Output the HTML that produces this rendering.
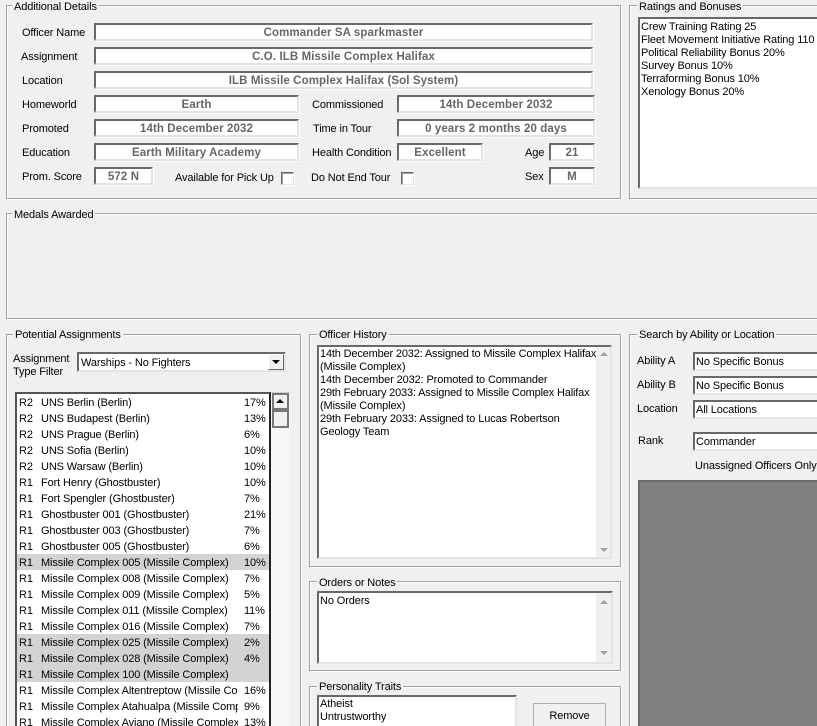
<!DOCTYPE html>
<html><head><meta charset="utf-8">
<style>
html,body{margin:0;padding:0;background:#f0f0f0;width:817px;height:726px;overflow:hidden}
#r{position:relative;width:817px;height:726px;overflow:hidden;background:#f0f0f0;font:11px/16px "Liberation Sans",sans-serif;letter-spacing:-.12px;color:#000}
#r div{position:absolute;box-sizing:border-box}
.g{border:1px solid #a0a0a0;box-shadow:inset 1px 1px 0 #fff,1px 1px 0 #fff}
.gt{background:#f0f0f0;padding:0 2px;white-space:nowrap;height:15px}
.l{white-space:nowrap;height:16px}
.f{background:#fff;border:2px solid;border-color:#696969 #e3e3e3 #e3e3e3 #696969;text-align:center;font-weight:bold;font-size:11.5px;color:#666;line-height:16px;letter-spacing:.1px;white-space:nowrap;overflow:hidden;box-shadow:1px 1px 0 #fff}
.w{background:#fff;border:2px solid;border-color:#696969 #e3e3e3 #e3e3e3 #696969;white-space:nowrap;overflow:hidden;padding:0 1px}
.c{background:#fff;border:1px solid;border-color:#696969 #e3e3e3 #e3e3e3 #696969;box-shadow:inset 1px 1px 0 #a0a0a0,1px 1px 0 #fff;width:13px;height:13px}
.row{left:0;width:252px;height:16px;line-height:18px;white-space:nowrap;overflow:hidden}
.hl{background:#d3d3d3}
.row span{position:absolute;top:0;height:16px}
.a{left:2px}.b{left:24px;width:197px;overflow:hidden}.p{left:227px}
.t{letter-spacing:-.17px}
</style></head><body><div id="r">

<div class="g" style="left:6px;top:5px;width:615px;height:194px"></div>
<div class="gt" style="left:12px;top:-1px">Additional Details</div>
<div class="l" style="left:22px;top:25px">Officer Name</div>
<div class="l" style="left:21px;top:49px">Assignment</div>
<div class="l" style="left:22px;top:73px">Location</div>
<div class="l" style="left:22px;top:97px">Homeworld</div>
<div class="l" style="left:22px;top:121px">Promoted</div>
<div class="l" style="left:22px;top:145px">Education</div>
<div class="l" style="left:22px;top:169px">Prom. Score</div>
<div class="f" style="left:94px;top:23px;width:499px;height:18px">Commander SA sparkmaster</div>
<div class="f" style="left:94px;top:47px;width:499px;height:18px">C.O. ILB Missile Complex Halifax</div>
<div class="f" style="left:94px;top:71px;width:499px;height:18px">ILB Missile Complex Halifax (Sol System)</div>
<div class="f" style="left:94px;top:95px;width:205px;height:18px">Earth</div>
<div class="f" style="left:94px;top:119px;width:205px;height:18px">14th December 2032</div>
<div class="f" style="left:94px;top:143px;width:205px;height:18px">Earth Military Academy</div>
<div class="f" style="left:94px;top:167px;width:59px;height:18px">572 N</div>
<div class="l" style="left:175px;top:170px">Available for Pick Up</div>
<div class="c" style="left:281px;top:172px"></div>
<div class="l" style="left:312px;top:97px">Commissioned</div>
<div class="l" style="left:313px;top:121px">Time in Tour</div>
<div class="l" style="left:312px;top:145px">Health Condition</div>
<div class="l" style="left:311px;top:170px">Do Not End Tour</div>
<div class="c" style="left:401px;top:172px"></div>
<div class="f" style="left:397px;top:95px;width:198px;height:18px">14th December 2032</div>
<div class="f" style="left:397px;top:119px;width:198px;height:18px">0 years 2 months 20 days</div>
<div class="f" style="left:397px;top:143px;width:86px;height:18px">Excellent</div>
<div class="l" style="left:525px;top:145px">Age</div>
<div class="l" style="left:525px;top:169px">Sex</div>
<div class="f" style="left:549px;top:143px;width:46px;height:18px">21</div>
<div class="f" style="left:549px;top:167px;width:46px;height:18px">M</div>

<div class="g" style="left:629px;top:5px;width:188px;height:194px;border-right:0"></div>
<div class="gt" style="left:637px;top:-1px">Ratings and Bonuses</div>
<div class="w" style="left:638px;top:17px;width:179px;height:172px;line-height:13px;padding-top:2px;border-right:0">Crew Training Rating 25<br>Fleet Movement Initiative Rating 110<br>Political Reliability Bonus 20%<br>Survey Bonus 10%<br>Terraforming Bonus 10%<br>Xenology Bonus 20%</div>

<div class="g" style="left:6px;top:213px;width:811px;height:106px;border-right:0"></div>
<div class="gt" style="left:12px;top:207px">Medals Awarded</div>

<div class="g" style="left:6px;top:334px;width:295px;height:392px;border-bottom:0"></div>
<div class="gt" style="left:13px;top:327px">Potential Assignments</div>
<div class="l" style="left:13px;top:351px">Assignment</div>
<div class="l" style="left:13px;top:364px">Type Filter</div>
<div class="w" style="left:77px;top:352px;width:209px;height:20px;line-height:18px;padding-left:2px">Warships - No Fighters</div>
<div style="left:268px;top:354px;width:16px;height:16px;background:#f0f0f0;border:1px solid;border-color:#fff #696969 #696969 #fff"></div>
<div style="left:272px;top:360px;width:0;height:0;border-left:4px solid transparent;border-right:4px solid transparent;border-top:4px solid #000"></div>

<div style="left:15px;top:392px;width:256px;height:334px;background:#fff;border-top:2px solid #555;border-left:2px solid #555;border-right:2px solid #222;overflow:hidden">
<div class="row" style="top:0"><span class="a">R2</span><span class="b">UNS Berlin (Berlin)</span><span class="p">17%</span></div>
<div class="row" style="top:16px"><span class="a">R2</span><span class="b">UNS Budapest (Berlin)</span><span class="p">13%</span></div>
<div class="row" style="top:32px"><span class="a">R2</span><span class="b">UNS Prague (Berlin)</span><span class="p">6%</span></div>
<div class="row" style="top:48px"><span class="a">R2</span><span class="b">UNS Sofia (Berlin)</span><span class="p">10%</span></div>
<div class="row" style="top:64px"><span class="a">R2</span><span class="b">UNS Warsaw (Berlin)</span><span class="p">10%</span></div>
<div class="row" style="top:80px"><span class="a">R1</span><span class="b">Fort Henry (Ghostbuster)</span><span class="p">10%</span></div>
<div class="row" style="top:96px"><span class="a">R1</span><span class="b">Fort Spengler (Ghostbuster)</span><span class="p">7%</span></div>
<div class="row" style="top:112px"><span class="a">R1</span><span class="b">Ghostbuster 001 (Ghostbuster)</span><span class="p">21%</span></div>
<div class="row" style="top:128px"><span class="a">R1</span><span class="b">Ghostbuster 003 (Ghostbuster)</span><span class="p">7%</span></div>
<div class="row" style="top:144px"><span class="a">R1</span><span class="b">Ghostbuster 005 (Ghostbuster)</span><span class="p">6%</span></div>
<div class="row hl" style="top:160px"><span class="a">R1</span><span class="b">Missile Complex 005 (Missile Complex)</span><span class="p">10%</span></div>
<div class="row" style="top:176px"><span class="a">R1</span><span class="b">Missile Complex 008 (Missile Complex)</span><span class="p">7%</span></div>
<div class="row" style="top:192px"><span class="a">R1</span><span class="b">Missile Complex 009 (Missile Complex)</span><span class="p">5%</span></div>
<div class="row" style="top:208px"><span class="a">R1</span><span class="b">Missile Complex 011 (Missile Complex)</span><span class="p">11%</span></div>
<div class="row" style="top:224px"><span class="a">R1</span><span class="b">Missile Complex 016 (Missile Complex)</span><span class="p">7%</span></div>
<div class="row hl" style="top:240px"><span class="a">R1</span><span class="b">Missile Complex 025 (Missile Complex)</span><span class="p">2%</span></div>
<div class="row hl" style="top:256px"><span class="a">R1</span><span class="b">Missile Complex 028 (Missile Complex)</span><span class="p">4%</span></div>
<div class="row hl" style="top:272px"><span class="a">R1</span><span class="b">Missile Complex 100 (Missile Complex)</span></div>
<div class="row" style="top:288px"><span class="a">R1</span><span class="b">Missile Complex Altentreptow (Missile Complex)</span><span class="p">16%</span></div>
<div class="row" style="top:304px"><span class="a">R1</span><span class="b">Missile Complex Atahualpa (Missile Complex)</span><span class="p">9%</span></div>
<div class="row" style="top:320px;height:12px"><span class="a">R1</span><span class="b">Missile Complex Aviano (Missile Complex)</span><span class="p">13%</span></div>
</div>
<div style="left:271px;top:392px;width:19px;height:334px;background:#f6f6f6;border-top:1px solid #ccc"></div>
<div style="left:272px;top:393px;width:17px;height:17px;background:#f0f0f0;border:2px solid #777"></div>
<div style="left:276px;top:399px;width:0;height:0;border-left:4px solid transparent;border-right:4px solid transparent;border-bottom:4px solid #000"></div>
<div style="left:272px;top:410px;width:17px;height:18px;background:#f0f0f0;border:2px solid #777"></div>

<div class="g" style="left:309px;top:334px;width:312px;height:233px"></div>
<div class="gt" style="left:317px;top:327px">Officer History</div>
<div class="w" style="left:317px;top:345px;width:295px;height:214px;line-height:13px;padding-top:1px"><span class="t">14th December 2032: Assigned to Missile Complex Halifax</span><br>(Missile Complex)<br>14th December 2032: Promoted to Commander<br><span class="t">29th February 2033: Assigned to Missile Complex Halifax</span><br>(Missile Complex)<br>29th February 2033: Assigned to Lucas Robertson<br>Geology Team</div>
<div style="left:596px;top:347px;width:14px;height:210px;background:#f0f0f0"></div>
<div style="left:600px;top:352px;width:0;height:0;border-left:4px solid transparent;border-right:4px solid transparent;border-bottom:4px solid #a0a0a0"></div>
<div style="left:600px;top:548px;width:0;height:0;border-left:4px solid transparent;border-right:4px solid transparent;border-top:4px solid #a0a0a0"></div>

<div class="g" style="left:309px;top:581px;width:312px;height:90px"></div>
<div class="gt" style="left:317px;top:575px">Orders or Notes</div>
<div class="w" style="left:317px;top:591px;width:296px;height:73px;line-height:13px;padding-top:2px">No Orders</div>
<div style="left:596px;top:593px;width:15px;height:69px;background:#f0f0f0"></div>
<div style="left:600px;top:600px;width:0;height:0;border-left:4px solid transparent;border-right:4px solid transparent;border-bottom:4px solid #a0a0a0"></div>
<div style="left:600px;top:651px;width:0;height:0;border-left:4px solid transparent;border-right:4px solid transparent;border-top:4px solid #a0a0a0"></div>

<div class="g" style="left:309px;top:686px;width:312px;height:40px;border-bottom:0"></div>
<div class="gt" style="left:317px;top:679px">Personality Traits</div>
<div class="w" style="left:317px;top:695px;width:200px;height:31px;line-height:13px;padding-top:1px;border-bottom:0">Atheist<br>Untrustworthy</div>
<div style="left:533px;top:703px;width:73px;height:23px;background:#f0f0f0;border:1px solid #adadad;border-bottom:0;text-align:center;line-height:24px">Remove</div>

<div class="g" style="left:629px;top:334px;width:188px;height:392px;border-right:0;border-bottom:0"></div>
<div class="gt" style="left:637px;top:327px">Search by Ability or Location</div>
<div class="l" style="left:637px;top:353px">Ability A</div>
<div class="l" style="left:637px;top:377px">Ability B</div>
<div class="l" style="left:637px;top:401px">Location</div>
<div class="l" style="left:638px;top:433px">Rank</div>
<div class="w" style="left:693px;top:352px;width:124px;height:19px;line-height:16px;border-right:0">No Specific Bonus</div>
<div class="w" style="left:693px;top:376px;width:124px;height:19px;line-height:16px;border-right:0">No Specific Bonus</div>
<div class="w" style="left:693px;top:400px;width:124px;height:19px;line-height:16px;border-right:0">All Locations</div>
<div class="w" style="left:693px;top:432px;width:124px;height:19px;line-height:16px;border-right:0">Commander</div>
<div class="l" style="left:695px;top:458px">Unassigned Officers Only</div>
<div style="left:638px;top:480px;width:179px;height:246px;background:#808080;border-top:2px solid #696969;border-left:2px solid #696969"></div>

</div></body></html>
